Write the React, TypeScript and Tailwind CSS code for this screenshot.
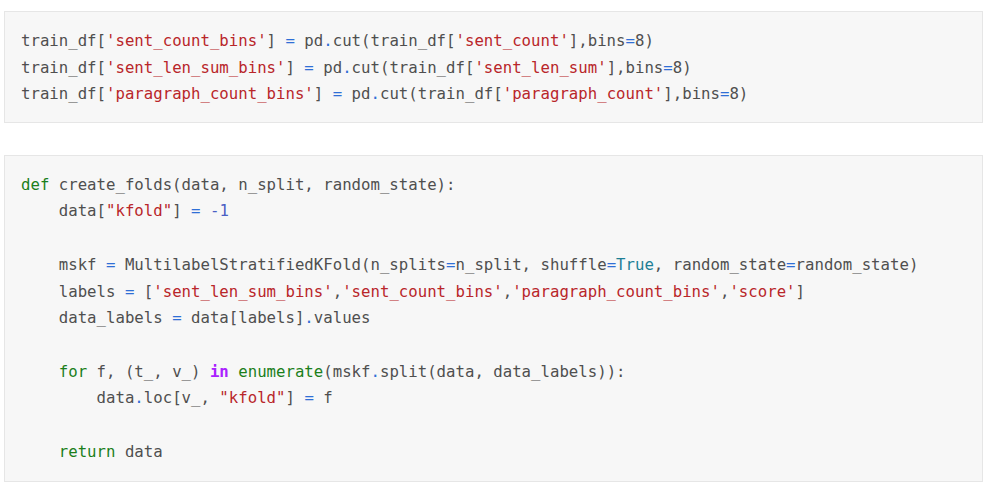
import React from 'react';

type Tok = [string, string?];

const C = {
  str: 'text-[#b9262a]',
  op: 'text-[#2f6fd6]',
  kw: 'text-[#1b7f1b]',
  pur: 'text-[#aa22ff] font-bold',
  num: 'text-[#4b5fc4]',
  tru: 'text-[#1d7f96]',
};

const block1: Tok[][] = [
  [["train_df["], ["'sent_count_bins'", C.str], ["] "], ["=", C.op], [" pd"], [".", C.op], ["cut(train_df["], ["'sent_count'", C.str], ["],bins"], ["=", C.op], ["8)"]],
  [["train_df["], ["'sent_len_sum_bins'", C.str], ["] "], ["=", C.op], [" pd"], [".", C.op], ["cut(train_df["], ["'sent_len_sum'", C.str], ["],bins"], ["=", C.op], ["8)"]],
  [["train_df["], ["'paragraph_count_bins'", C.str], ["] "], ["=", C.op], [" pd"], [".", C.op], ["cut(train_df["], ["'paragraph_count'", C.str], ["],bins"], ["=", C.op], ["8)"]],
];

const block2: Tok[][] = [
  [["def", C.kw], [" create_folds(data, n_split, random_state):"]],
  [["    data["], ['"kfold"', C.str], ["] "], ["=", C.op], [" "], ["-1", C.num]],
  [[""]],
  [["    mskf "], ["=", C.op], [" MultilabelStratifiedKFold(n_splits"], ["=", C.op], ["n_split, shuffle"], ["=", C.op], ["True", C.tru], [", random_state"], ["=", C.op], ["random_state)"]],
  [["    labels "], ["=", C.op], [" ["], ["'sent_len_sum_bins'", C.str], [","], ["'sent_count_bins'", C.str], [","], ["'paragraph_count_bins'", C.str], [","], ["'score'", C.str], ["]"]],
  [["    data_labels "], ["=", C.op], [" data[labels]"], [".", C.op], ["values"]],
  [[""]],
  [["    "], ["for", C.kw], [" f, (t_, v_) "], ["in", C.pur], [" "], ["enumerate", C.kw], ["(mskf"], [".", C.op], ["split(data, data_labels)):"]],
  [["        data"], [".", C.op], ["loc[v_, "], ['"kfold"', C.str], ["] "], ["=", C.op], [" f"]],
  [[""]],
  [["    "], ["return", C.kw], [" data"]],
];

function CodeCell({ lines, pad, row }: { lines: Tok[][]; pad: string; row: string }) {
  return (
    <div className={`bg-[#f7f7f7] border border-[#e6e6e6] px-4 ${pad}`}>
      <pre className="font-['DejaVu_Sans_Mono',monospace] text-[15.7px] text-[#4f4f4f] whitespace-pre">
        {lines.map((line, i) => (
          <div key={i} className={row}>
            {line.map(([t, cls], j) => (
              <span key={j} className={cls}>{t}</span>
            ))}
          </div>
        ))}
      </pre>
    </div>
  );
}

export default function App() {
  return (
    <div className="w-[991px] h-[487px] bg-white pt-[11px] pl-[4px] pr-[8px] flex flex-col gap-8">
      <CodeCell lines={block1} pad="pt-4 pb-[14px]" row="h-[26.6px] leading-[26.6px]" />
      <CodeCell lines={block2} pad="py-4" row="h-[26.7px] leading-[26.7px]" />
    </div>
  );
}
